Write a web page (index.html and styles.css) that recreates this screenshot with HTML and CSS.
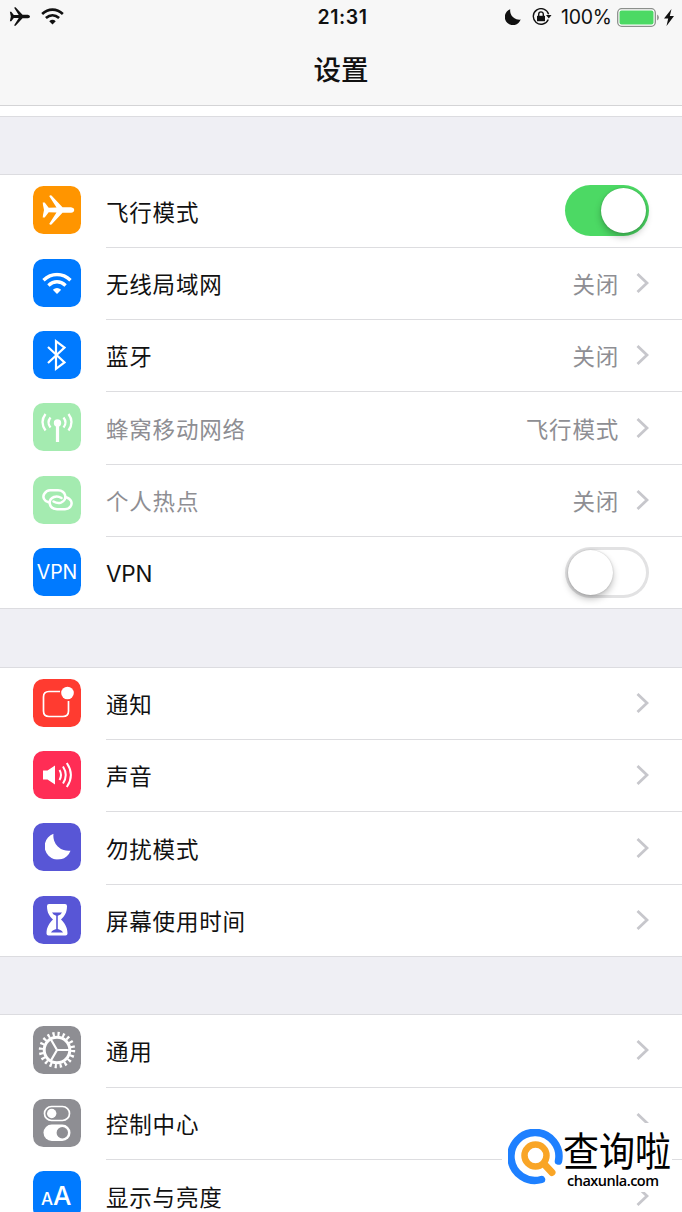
FILE: index.html
```html
<!doctype html>
<html lang="zh-CN">
  <head>
    <meta charset="utf-8">
    <title>设置</title>
    <link rel="stylesheet" href="styles.css">
  </head>
  <body>
    <svg class="defs">
      <symbol id="plane" viewBox="0 0 32 30">
        <path d="M0 7.500h2.200l4 5.200 7.800-.2L6.800 1.200Q7.300 0 9 .5L20 12.200H28.500Q31.800 12.800 31.800 15T28.500 17.800H20L9 29.500Q7.300 30 6.800 28.800L14 17.500 6.200 17.300 2.200 22.500H0L1.500 15z" fill="currentColor"/>
      </symbol>
      <symbol id="wifi" viewBox="0 0 30 22">
        <g fill="none" stroke="currentColor" stroke-width="3.400">
          <path d="M1.500 7.800Q7.500 2 15 2t13.500 5.800"/>
          <path d="M6.400 13Q10.500 9.300 15 9.300t8.600 3.700"/>
        </g>
        <path d="M10.800 17.300Q15 13.500 19.200 17.300L15 21.500z" fill="currentColor"/>
      </symbol>
      <symbol id="moon" viewBox="0 0 26 26">
        <path d="M8.500 0.300A13.300 13.300 0 1 0 25.500 17.200A15 15 0 0 1 8.500 .3z" fill="currentColor"/>
      </symbol>
      <symbol id="chevron" viewBox="0 0 13 20">
        <path d="M1.500 1L11 10 1.500 19" fill="none" stroke="#c7c7cc" stroke-width="2.800"/>
      </symbol>
    </svg>

    <header class="header">
      <div class="status">
        <div class="status-left">
          <svg class="st-plane"><use href="#plane"/></svg>
          <svg class="st-wifi"><use href="#wifi"/></svg>
        </div>
        <div class="clock">21:31</div>
        <div class="status-right">
          <svg class="st-moon"><use href="#moon"/></svg>
          <svg class="st-lock" viewBox="0 0 20 18">
            <path d="M16.300 11.500A7.800 7.800 0 1 1 16.600 6.300" fill="none" stroke="#111" stroke-width="1.400"/>
            <path d="M14 7h5.500l-2.700 3.600z" fill="#111"/>
            <path d="M5 7.800h8v5.400H5z" fill="#111"/>
            <path d="M6.700 8V6.200a2.300 2.300 0 0 1 4.600 0V8" fill="none" stroke="#111" stroke-width="1.400"/>
          </svg>
          <span class="percent">100%</span>
          <svg class="st-battery" viewBox="0 0 43 19">
            <rect x=".7" y=".7" width="37.600" height="17.600" rx="4" fill="#fff" stroke="#8c908c" stroke-width="1.300"/>
            <rect x="2.500" y="2.500" width="34" height="14" rx="2" fill="#4cd964"/>
            <path d="M40 6.500q2 1 2 3t-2 3z" fill="#999"/>
          </svg>
          <svg class="st-bolt" viewBox="0 0 10 17">
            <path d="M7.500 0L0 9.500h4.200L2.500 17 10 7H5.800z" fill="#111"/>
          </svg>
        </div>
      </div>
      <h1 class="title">设置</h1>
    </header>

    <main class="list">
      <section class="group">
        <div class="row">
          <svg class="icon orange" viewBox="0 0 48 48"><use href="#plane" x="9.500" y="9" width="32" height="30"/></svg>
          <div class="cell"><span class="label">飞行模式</span><span class="switch on"></span></div>
        </div>
        <div class="row">
          <svg class="icon blue" viewBox="0 0 48 48"><use href="#wifi" x="9" y="13.500" width="30" height="22"/></svg>
          <div class="cell"><span class="label">无线局域网</span><span class="value">关闭</span><svg class="chevron"><use href="#chevron"/></svg></div>
        </div>
        <div class="row">
          <svg class="icon blue" viewBox="0 0 48 48">
            <path d="M15 16L31.500 31.500 23 37.800V10.200L31.500 16.500 15 32" fill="none" stroke="#fff" stroke-width="2.200"/>
          </svg>
          <div class="cell"><span class="label">蓝牙</span><span class="value">关闭</span><svg class="chevron"><use href="#chevron"/></svg></div>
        </div>
        <div class="row disabled">
          <svg class="icon green" viewBox="0 0 48 48">
            <g fill="none" stroke="#fff" stroke-width="2.300">
              <path d="M12.500 11Q6.500 19 12.500 27.500M17.500 14.500Q13.500 19.500 17.500 24.500M30.500 14.500Q34.500 19.500 30.500 24.500M35.500 11Q41.500 19 35.500 27.500"/>
              <path d="M24.500 20v19" stroke-width="3.200"/>
            </g>
            <circle cx="24.500" cy="20" r="3.700" fill="#fff"/>
          </svg>
          <div class="cell"><span class="label">蜂窝移动网络</span><span class="value">飞行模式</span><svg class="chevron"><use href="#chevron"/></svg></div>
        </div>
        <div class="row disabled">
          <svg class="icon green" viewBox="0 0 48 48">
            <g fill="none" stroke="#fff" stroke-width="2.500" stroke-linecap="round">
              <path d="M15.500 26.300C11 25 9 21 11.500 17.500Q13.500 14.200 17 14.200H25C33 14.500 35 23.500 28 26.600Q24.500 28 20.500 25.500"/>
              <path d="M33 21.200C38 22.500 40 27 37.500 30.500Q35.500 33.200 32 33.200H24C16 33 14 24 21 21Q24.500 19.500 28.500 22"/>
            </g>
          </svg>
          <div class="cell"><span class="label">个人热点</span><span class="value">关闭</span><svg class="chevron"><use href="#chevron"/></svg></div>
        </div>
        <div class="row">
          <div class="icon blue vpn">VPN</div>
          <div class="cell"><span class="label latin">VPN</span><span class="switch"></span></div>
        </div>
      </section>

      <section class="group">
        <div class="row">
          <svg class="icon red" viewBox="0 0 48 48">
            <path d="M27 12.500H16Q10.500 12.500 10.500 18V32Q10.500 37.500 16 37.500H30Q35.500 37.500 35.500 32V22" fill="none" stroke="#fff" stroke-width="1.700"/>
            <circle cx="34.500" cy="14" r="6.300" fill="#fff"/>
          </svg>
          <div class="cell"><span class="label">通知</span><svg class="chevron"><use href="#chevron"/></svg></div>
        </div>
        <div class="row">
          <svg class="icon pink" viewBox="0 0 48 48">
            <path d="M10 19.500h4.500L22 14.500v19l-7.500-5H10z" fill="#fff"/>
            <path d="M26.500 19Q29.500 24 26.500 29M30 15.500Q35.500 24 30 32.500M33.800 12Q42 24 33.800 36" fill="none" stroke="#fff" stroke-width="2"/>
          </svg>
          <div class="cell"><span class="label">声音</span><svg class="chevron"><use href="#chevron"/></svg></div>
        </div>
        <div class="row">
          <svg class="icon purple" viewBox="0 0 48 48"><use href="#moon" x="12" y="10.500" width="26" height="26"/></svg>
          <div class="cell"><span class="label">勿扰模式</span><svg class="chevron"><use href="#chevron"/></svg></div>
        </div>
        <div class="row">
          <svg class="icon purple" viewBox="0 0 48 48">
            <path d="M14 10Q14 8 16 8H32Q34 8 34 10C34 17 31.500 20 28 23.500 31.500 27 34.500 31 34.500 37.500Q34.500 39.500 32.500 39.500H15.500Q13.500 39.500 13.500 37.500C13.500 31 16.500 27 20 23.500 16.500 20 14 17 14 10z" fill="#fff"/>
            <path d="M19 16.500H29Q28 18.800 24.800 19.700V33Q29 34.200 30 36.500H18Q19 34.200 23.200 33V19.700Q20 18.800 19 16.500z" fill="#5856d6"/>
          </svg>
          <div class="cell"><span class="label">屏幕使用时间</span><svg class="chevron"><use href="#chevron"/></svg></div>
        </div>
      </section>

      <section class="group">
        <div class="row">
          <svg class="icon gray" viewBox="0 0 48 48">
            <g fill="none" stroke="#fff">
              <circle cx="24" cy="24" r="16" stroke-width="4.400" stroke-dasharray="2.200 2.827"/>
              <circle cx="24" cy="24" r="12.800" stroke-width="3"/>
              <path d="M24 24H37M24 24L17.500 12.700M24 24L17.500 35.300" stroke-width="2.200"/>
            </g>
          </svg>
          <div class="cell"><span class="label">通用</span><svg class="chevron"><use href="#chevron"/></svg></div>
        </div>
        <div class="row">
          <svg class="icon gray" viewBox="0 0 48 48">
            <rect x="11.500" y="7.500" width="25" height="14" rx="7" fill="none" stroke="#fff" stroke-width="1.700"/>
            <circle cx="18.700" cy="14.500" r="4.700" fill="#fff"/>
            <rect x="10.500" y="25.500" width="27" height="16.500" rx="8.250" fill="#fff"/>
            <circle cx="29.300" cy="33.700" r="5.700" fill="#8e8e93"/>
          </svg>
          <div class="cell"><span class="label">控制中心</span><svg class="chevron"><use href="#chevron"/></svg></div>
        </div>
        <div class="row">
          <div class="icon blue aa"><span class="aa-small">A</span>A</div>
          <div class="cell"><span class="label">显示与亮度</span><svg class="chevron"><use href="#chevron"/></svg></div>
        </div>
      </section>
    </main>

    <div class="watermark">
      <svg class="wm-logo" viewBox="0 0 56 56">
        <g fill="none" stroke-linecap="round">
          <path d="M33.500 50.500A24 24 0 1 1 50.500 32" stroke="#1e80ff" stroke-width="7.500"/>
          <circle cx="27.500" cy="26.500" r="11" stroke="#f9a526" stroke-width="6.500"/>
          <path d="M37 36L44 43.500" stroke="#f9a526" stroke-width="7"/>
        </g>
      </svg>
      <div class="wm-text">
        <div class="wm-name">查询啦</div>
        <div class="wm-site">chaxunla.com</div>
      </div>
    </div>
  </body>
</html>
```
FILE: styles.css
```css
* {
  box-sizing: border-box;
}
body {
  position: relative;
  margin: 0;
  height: 1212px;
  overflow: hidden;
  background: #efeff4;
  color: #111;
  font-family: Inter, 'Noto Sans CJK SC', sans-serif;
}
.defs {
  display: none;
}
.header {
  height: 106px;
  background: #f7f7f7;
  border-bottom: 1px solid #d4d4d6;
}
.status {
  display: grid;
  grid-template-columns: 1fr auto 1fr;
  align-items: center;
  height: 34px;
  padding: 0 8px 0 9px;
}
.status-left,
.status-right {
  display: flex;
  align-items: center;
}
.status-left {
  padding-bottom: 1px;
}
.status-right {
  justify-content: flex-end;
}
.st-plane {
  width: 22px;
  height: 19px;
  margin-right: 10px;
}
.st-wifi {
  width: 23px;
  height: 17px;
}
.clock {
  padding-left: 2px;
  font-size: 19.5px;
  font-weight: 600;
  letter-spacing: 0.5px;
}
.st-moon {
  width: 16px;
  height: 16px;
  margin-right: 11px;
}
.st-lock {
  width: 20px;
  height: 18px;
  margin-right: 9px;
}
.percent {
  width: 52px;
  margin-right: 4px;
  font-size: 19.5px;
  letter-spacing: -0.3px;
  white-space: nowrap;
}
.st-battery {
  width: 43px;
  height: 19px;
  margin-right: 4px;
}
.st-bolt {
  width: 10px;
  height: 17px;
}
.title {
  margin: 0;
  padding-top: 16px;
  font-size: 27.5px;
  font-weight: 500;
  line-height: 40px;
  text-align: center;
}
/* white strip is the end of the scrolled search area */
.list {
  height: 1106px;
  border-top: 10px solid #fff;
  box-shadow: inset 0 1px #dcdce0;
}
.group {
  margin-bottom: 58.2px;
  background: #fff;
  box-shadow: 0 -1px #dcdce0;
}
.group:first-child {
  margin-top: 59.4px;
}
.row {
  display: flex;
  height: 72.35px;
  padding-left: 33px;
}
.icon {
  flex: none;
  width: 48px;
  height: 48px;
  margin: 11px 25px 0 0;
  border-radius: 10.5px;
  color: #fff;
}
.orange { background: #ff9500; }
.blue { background: #007aff; }
.green { background: #4cd964; }
.red { background: #ff3b30; }
.pink { background: #ff2d55; }
.purple { background: #5856d6; }
.gray { background: #8e8e93; }
.vpn {
  font-size: 19.5px;
  line-height: 48px;
  text-align: center;
}
.aa {
  padding-left: 8px;
  font-size: 26px;
  font-weight: 500;
  line-height: 49px;
}
.aa-small {
  font-size: 17px;
}
.cell {
  display: flex;
  flex: 1;
  align-items: center;
  padding: 0 33px 1px 0;
  border-bottom: 1px solid #dddde0;
}
.row:last-child .cell {
  border-bottom: 0;
}
.group .row:last-child {
  box-shadow: inset 0 -1px #dcdce0;
}
.label {
  flex: 1;
  font-size: 22.5px;
  letter-spacing: 0.8px;
}
.latin {
  padding-top: 2px;
  letter-spacing: -0.2px;
}
.value {
  margin-right: 17px;
  color: #8e8e93;
  font-size: 22.5px;
  letter-spacing: 0.8px;
}
.chevron {
  width: 13px;
  height: 20px;
}
.disabled .icon {
  opacity: 0.5;
}
.disabled .label {
  color: #8e8e93;
}
.switch {
  width: 84px;
  height: 51px;
  padding: 3px;
  border-radius: 26px;
  box-shadow: inset 0 0 0 3px #e2e2e3;
}
.switch::before {
  content: '';
  display: block;
  width: 45px;
  height: 45px;
  border-radius: 50%;
  background: #fff;
  box-shadow: 0 4px 7px rgba(0, 0, 0, 0.25), 0 0 2px rgba(0, 0, 0, 0.2);
}
.switch.on {
  background: #4cd964;
  box-shadow: none;
}
.switch.on::before {
  margin-left: 33px;
}
.watermark {
  position: absolute;
  top: 1123px;
  left: 502px;
  display: flex;
  width: 170px;
  height: 69px;
  padding: 6px 0 0 6px;
  background: #fff;
}
.wm-logo {
  flex: none;
  width: 56px;
  height: 56px;
}
.wm-text {
  padding-top: 6px;
  color: #000;
}
.wm-name {
  margin-left: -1px;
  font-size: 36px;
  line-height: 34px;
  transform: scaleY(1.1);
}
.wm-site {
  margin: 4px 0 0 3px;
  font-family: 'Open Sans', sans-serif;
  font-size: 14.5px;
  font-weight: 600;
  letter-spacing: -0.5px;
  line-height: 16px;
}
```
